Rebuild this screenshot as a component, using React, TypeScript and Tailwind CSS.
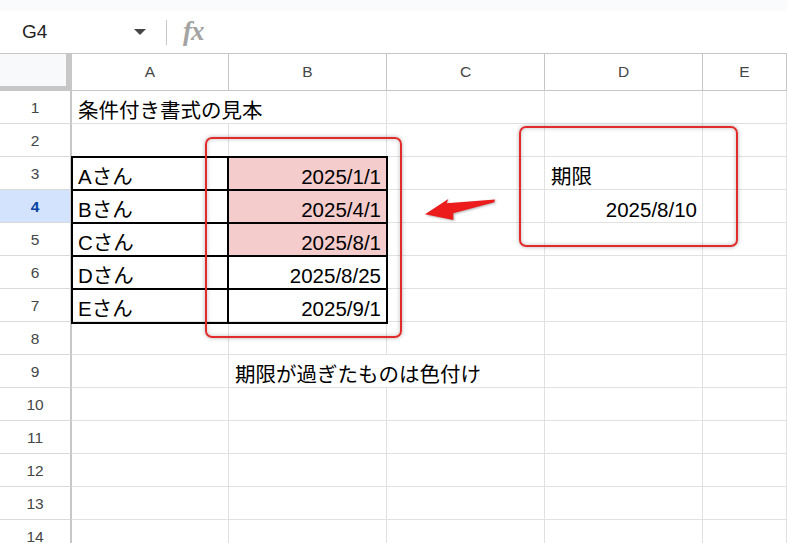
type Cell = {
  text?: string;
  align?: "left" | "right";
  pink?: boolean;
  spill?: boolean; // text overflows into the next column, so no grid line on the right
};

const COLS = ["A", "B", "C", "D", "E"];
const COL_W = ["w-[157px]", "w-[158px]", "w-[158px]", "w-[158px]", "flex-1"];

const cells: Record<string, Cell> = {
  A1: { text: "条件付き書式の見本", spill: true },
  A3: { text: "Aさん" },
  A4: { text: "Bさん" },
  A5: { text: "Cさん" },
  A6: { text: "Dさん" },
  A7: { text: "Eさん" },
  B3: { text: "2025/1/1", align: "right", pink: true },
  B4: { text: "2025/4/1", align: "right", pink: true },
  B5: { text: "2025/8/1", align: "right", pink: true },
  B6: { text: "2025/8/25", align: "right" },
  B7: { text: "2025/9/1", align: "right" },
  B9: { text: "期限が過ぎたものは色付け", spill: true },
  D3: { text: "期限" },
  D4: { text: "2025/8/10", align: "right" },
};

const ROWS = Array.from({ length: 14 }, (_, i) => i + 1);
const ACTIVE_ROW = 4;

export default function App() {
  return (
    <div
      className="relative h-[543px] w-[787px] overflow-hidden bg-white text-black"
      style={{ fontFamily: '"Liberation Sans", "Noto Sans CJK JP", sans-serif' }}
    >
      <div className="h-[11px] bg-[#f9fbfd]" />
      <FormulaBar />

      {/* column headers */}
      <div className="flex h-[37px]">
        <div className="w-[72px] shrink-0 border-b-[5px] border-r-[6px] border-[#c7c7c7] bg-[#f8f9fa]" />
        {COLS.map((c, i) => (
          <div
            key={c}
            className={`${COL_W[i]} flex shrink-0 items-center justify-center border-b border-r border-[#c4c7c5] text-[15.5px] text-[#444746]`}
          >
            {c}
          </div>
        ))}
      </div>

      {ROWS.map((r) => (
        <div key={r} className="flex h-[33px]">
          <div
            className={`flex w-[72px] shrink-0 items-center justify-center border-b border-r-2 border-b-[#d9d9d9] border-r-[#c7c7c7] pt-[2px] text-[15.5px] ${
              r === ACTIVE_ROW
                ? "bg-[#d3e3fd] font-bold text-[#0842a0]"
                : "text-[#444746]"
            }`}
          >
            {r}
          </div>
          {COLS.map((c, i) => {
            const cell = cells[`${c}${r}`] ?? {};
            return (
              <div
                key={c}
                className={`${COL_W[i]} flex shrink-0 items-end border-b border-[#e1e1e1] pb-[1px] text-[20.5px] leading-[23px] whitespace-nowrap ${
                  cell.spill ? "relative z-10" : "border-r"
                } ${cell.align === "right" ? "justify-end pr-[5px]" : "pl-[6px]"} ${
                  cell.pink ? "bg-[#f4cccc]" : ""
                }`}
              >
                {cell.text}
              </div>
            );
          })}
        </div>
      ))}

      {/* black borders around A3:B7 */}
      <div className="absolute left-[71px] top-[156px] flex w-[317px] flex-col border-2 border-black">
        {[0, 1, 2, 3, 4].map((i) => (
          <div
            key={i}
            className={`flex ${i < 4 ? "h-[33px] border-b-2 border-black" : "h-[32px]"}`}
          >
            <div className="w-[156px] border-r-2 border-black" />
          </div>
        ))}
      </div>

      {/* annotation boxes */}
      <div className="absolute left-[205px] top-[137px] h-[201px] w-[197px] rounded-[7px] border-2 border-[#e22b2b] shadow-[0_0_4px_rgba(0,0,0,0.3),inset_0_0_4px_rgba(0,0,0,0.25)]" />
      <div className="absolute left-[519px] top-[126px] h-[121px] w-[219px] rounded-[7px] border-2 border-[#e22b2b] shadow-[0_0_4px_rgba(0,0,0,0.3),inset_0_0_4px_rgba(0,0,0,0.25)]" />

      <svg
        className="absolute left-[420px] top-[194px]"
        width="80"
        height="32"
        viewBox="0 0 80 32"
      >
        <polygon
          points="5,20.3 28.3,5 26.7,9.3 75,5.5 74.3,8.3 33.3,19.3 33.3,26"
          fill="#ec1c1c"
          style={{ filter: "drop-shadow(1px 1.5px 1px rgba(0,0,0,0.3))" }}
        />
      </svg>
    </div>
  );
}

function FormulaBar() {
  return (
    <div className="flex h-[43px] items-center border-b border-[#c4c7c5]">
      <div className="flex w-[166px] items-center justify-between pl-[22px] pr-[20px]">
        <span className="text-[19px] text-[#1f1f1f]">G4</span>
        <svg width="12" height="6" viewBox="0 0 12 6">
          <polygon points="0,0 12,0 6,6" fill="#444746" />
        </svg>
      </div>
      <div className="h-[25px] w-px bg-[#c7c7c7]" />
      <span
        className="ml-[16px] -mt-[1px] text-[27px] leading-none font-bold italic tracking-[-1px] text-[#a3a3a3]"
        style={{ fontFamily: '"Liberation Serif", serif' }}
      >
        fx
      </span>
    </div>
  );
}
